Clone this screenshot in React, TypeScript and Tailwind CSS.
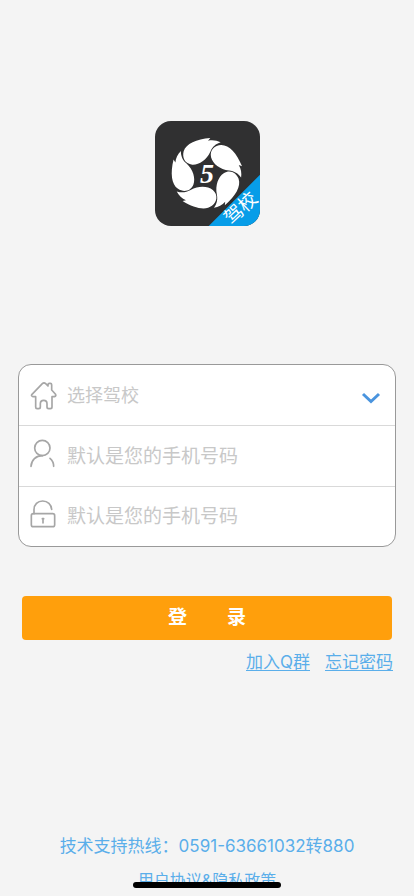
import React, { useState } from 'react';

const PETAL =
  'M110 113 C117 90 148 76 190 73 L183 81 C196 78 209 80 221 86 C206 91 197 99 190 114 C178 139 156 154 136 153 C113 151 105 131 110 113 Z';

const petalAngles = [0, 72, 144, 216, 288];

function Logo() {
  return (
    <svg viewBox="24 22 315 315" className="h-[105px] w-[105px] overflow-visible" role="img" aria-label="驾校">
      <defs>
        <clipPath id="logo-shape">
          <rect x="24" y="22" width="315" height="315" rx="48" />
        </clipPath>
      </defs>
      <g clipPath="url(#logo-shape)">
        <rect x="24" y="22" width="315" height="315" fill="#303031" />
        <path d="M339 183 V337 H185 Z" fill="#079de8" />
        {petalAngles.map((angle) => (
          <path key={angle} d={PETAL} fill="#fff" transform={`rotate(${angle} 179 181)`} />
        ))}
      </g>
      <text
        x="180"
        y="208"
        textAnchor="middle"
        fill="#fff"
        className="font-['Liberation_Serif',serif] text-[84px] font-bold italic"
      >
        5
      </text>
      <text
        x="281"
        y="303"
        textAnchor="middle"
        fill="#fff"
        transform="rotate(-43 281 283)"
        className="font-['Noto_Sans_CJK_SC',sans-serif] text-[56px]"
      >
        驾校
      </text>
    </svg>
  );
}

const iconClass = 'w-[27px] h-[29px] shrink-0 fill-none stroke-[#a6a6a6] stroke-[5]';

function HouseIcon() {
  return (
    <svg viewBox="0 0 81 87" className={iconClass} strokeLinecap="round" strokeLinejoin="round">
      <path d="M17 47 H9 Q2 45 6 40 L37 8 Q42 3 47 8 L54 15 V11 Q54 7 58 7 H61 Q65 7 65 11 V27 L76 39 Q80 45 73 47 H66 V78 Q66 83 61 83 H56 Q51 83 51 78 V68 Q51 58 41 58 Q31 58 31 68 V78 Q31 83 26 83 H21 Q17 83 17 78 Z" />
    </svg>
  );
}

function UserIcon() {
  return (
    <svg viewBox="0 0 81 87" className={`${iconClass} mb-[6px]`} strokeLinecap="round">
      <circle cx="37" cy="27" r="23" />
      <path d="M3 82 C4 63 18 50 37 50 M60 58 C67 64 71 72 71 82" />
    </svg>
  );
}

function LockIcon() {
  return (
    <svg viewBox="0 0 81 87" className={`${iconClass} mb-[6px]`} strokeLinecap="round">
      <path d="M12 44 V32 C12 16 23 6 38 6 C53 6 64 16 65 31" />
      <rect x="4" y="44" width="70" height="39" rx="6" />
      <path d="M37 59 H41 M39 60 V72" />
    </svg>
  );
}

const rowClass = 'flex items-center gap-[10px] pl-[11px] pr-3';
const fieldClass = 'h-full min-w-0 flex-1 bg-transparent outline-none';

export default function App() {
  const [school, setSchool] = useState('');
  const [account, setAccount] = useState('');
  const [password, setPassword] = useState('');

  return (
    <div className="relative flex min-h-screen flex-col overflow-hidden bg-[#f4f4f4] font-[Inter,'Noto_Sans_CJK_SC',sans-serif]">
      <header className="flex justify-center pt-[121px]">
        <Logo />
      </header>

      <form className="mt-[138px] px-[18px]" onSubmit={(e) => e.preventDefault()}>
        <div className="divide-y divide-[#d9d9d9] rounded-[13px] border border-[#999] bg-white">
          <div className={`${rowClass} relative h-[61px]`}>
            <HouseIcon />
            <select
              aria-label="选择驾校"
              value={school}
              onChange={(e) => setSchool(e.target.value)}
              className={`${fieldClass} appearance-none text-[18px] text-[#c8c8c8]`}
            >
              <option value="">选择驾校</option>
            </select>
            <svg
              viewBox="0 0 20 12"
              className="pointer-events-none absolute right-[14px] top-[27px] h-3 w-5 fill-none stroke-[#4a94de] stroke-[3]"
            >
              <path d="M2 2 L10 9.5 L18 2" />
            </svg>
          </div>
          <div className={`${rowClass} h-[61px]`}>
            <UserIcon />
            <input
              type="text"
              aria-label="账号"
              value={account}
              onChange={(e) => setAccount(e.target.value)}
              placeholder="默认是您的手机号码"
              className={`${fieldClass} text-[19px] placeholder:text-[#c8c8c8]`}
            />
          </div>
          <div className={`${rowClass} h-[59px]`}>
            <LockIcon />
            <input
              type="password"
              aria-label="密码"
              value={password}
              onChange={(e) => setPassword(e.target.value)}
              placeholder="默认是您的手机号码"
              className={`${fieldClass} text-[19px] placeholder:text-[#c8c8c8]`}
            />
          </div>
        </div>

        <div className="mt-[49px] px-[4px]">
          <button
            type="submit"
            className="flex h-11 w-full items-center justify-center gap-10 rounded bg-[#ff9f0c] text-[19px] font-bold text-white"
          >
            <span>登</span>
            <span>录</span>
          </button>
        </div>

        <nav className="mt-[10px] flex justify-end gap-[15px] pr-[3px] text-[17px] leading-6 text-[#5aaeea] underline underline-offset-2">
          <a href="#group">加入Q群</a>
          <a href="#forgot">忘记密码</a>
        </nav>
      </form>

      <footer className="mt-auto flex flex-col items-center pb-[2px] text-[#5aaeea]">
        <a href="tel:0591-63661032" className="text-[17px] leading-6">
          技术支持热线：0591-63661032转880
        </a>
        <a href="#policy" className="mt-2 text-[16px] leading-7">
          用户协议&amp;隐私政策
        </a>
      </footer>

      <div className="absolute bottom-2 left-1/2 h-[6px] w-[148px] -translate-x-1/2 rounded-full bg-black" />
    </div>
  );
}
